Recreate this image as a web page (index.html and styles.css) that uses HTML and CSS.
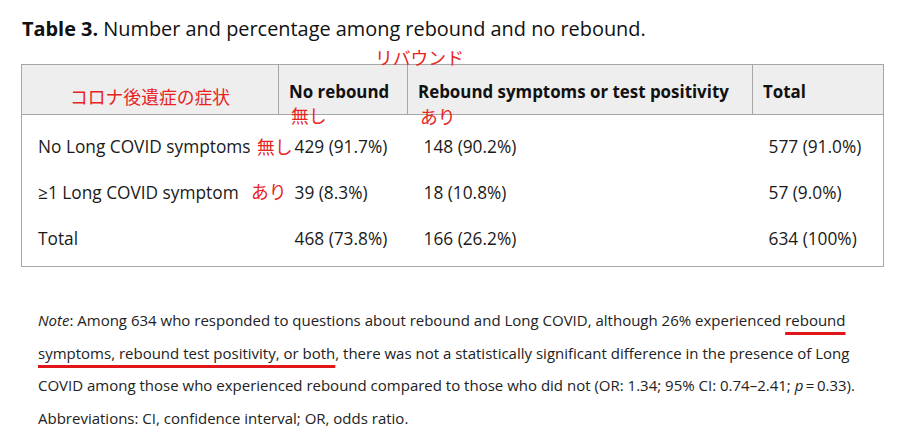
FILE: index.html
```html
<!DOCTYPE html>
<html lang="en">
<head>
<meta charset="utf-8">
<title>Table 3</title>
<link rel="stylesheet" href="styles.css">
</head>
<body>
<h2 class="caption"><b>Table 3.</b> Number and percentage among rebound and no rebound.</h2>
<div class="table-wrap">
  <table class="data">
    <thead>
      <tr>
        <th class="c1"></th>
        <th class="c2">No rebound</th>
        <th class="c3">Rebound symptoms or test positivity</th>
        <th class="c4">Total</th>
      </tr>
    </thead>
    <tbody>
      <tr class="first">
        <td>No Long COVID symptoms</td>
        <td>429 (91.7%)</td>
        <td>148 (90.2%)</td>
        <td>577 (91.0%)</td>
      </tr>
      <tr>
        <td>≥1 Long COVID symptom</td>
        <td>39 (8.3%)</td>
        <td>18 (10.8%)</td>
        <td>57 (9.0%)</td>
      </tr>
      <tr class="last">
        <td>Total</td>
        <td>468 (73.8%)</td>
        <td>166 (26.2%)</td>
        <td>634 (100%)</td>
      </tr>
    </tbody>
  </table>
  <span class="note-jp jp-symptom">コロナ後遺症の症状</span>
  <span class="note-jp jp-rebound">リバウンド</span>
  <span class="note-jp jp-nashi-h">無し</span>
  <span class="note-jp jp-ari-h">あり</span>
  <span class="note-jp jp-nashi-r">無し</span>
  <span class="note-jp jp-ari-r">あり</span>
</div>
<p class="note"><i>Note</i>: Among 634 who responded to questions about rebound and Long COVID, although 26% experienced <span class="mark">rebound</span><br><span class="mark">symptoms, rebound test positivity, or both</span>, there was not a statistically significant difference in the presence of Long<br>COVID among those who experienced rebound compared to those who did not (OR: 1.34; 95% CI: 0.74–2.41; <i>p</i>&#8201;=&#8201;0.33).<br>Abbreviations: CI, confidence interval; OR, odds ratio.</p>
</body>
</html>
```
FILE: styles.css
```css
html, body {
  margin: 0;
  padding: 0;
  background: #ffffff;
}
body {
  font-family: "Open Sans", "Noto Sans", "Noto Sans CJK JP", sans-serif;
  color: #1a1a1a;
}
.caption {
  margin: 0;
  padding: 15px 0 0 22px;
  font-size: 19.9px;
  font-weight: 400;
  line-height: 27px;
  color: #111;
}
.caption b {
  font-weight: 700;
}
.table-wrap {
  position: relative;
  margin: 22px 0 0 21px;
  width: 863px;
}
.data {
  width: 863px;
  border-collapse: collapse;
  border: 1px solid #a6a6a6;
  font-size: 17.3px;
  color: #1a1a1a;
}
.data th {
  background: #eeeeee;
  text-align: left;
  font-weight: 700;
  font-size: 16.9px;
  height: 50px;
  padding: 3px 0 0 10px;
  border-right: 1px solid #a6a6a6;
  border-bottom: 1px solid #a6a6a6;
  color: #111;
  box-sizing: border-box;
  white-space: nowrap;
}
.data th.c1 { width: 257px; }
.data th.c2 { width: 129px; }
.data th.c3 { width: 345px; }
.data th.c4 { border-right: none; }
.data td {
  height: 46px;
  padding: 0 0 0 16px;
  vertical-align: middle;
  white-space: nowrap;
  box-sizing: content-box;
}
.data tr.first td {
  padding-top: 8px;
}
.data tr.last td {
  padding-bottom: 5px;
}
.note-jp {
  position: absolute;
  font-family: "Noto Sans CJK JP", sans-serif;
  color: #e8231e;
  font-size: 17.8px;
  line-height: 20px;
  white-space: nowrap;
}
.jp-symptom { left: 49px; top: 22px; }
.jp-rebound { left: 354px; top: -17px; }
.jp-nashi-h { left: 270px; top: 41px; }
.jp-ari-h { left: 399px; top: 42px; }
.jp-nashi-r { left: 236px; top: 72px; }
.jp-ari-r { left: 230px; top: 117px; }
.note {
  margin: 37px 0 0 38px;
  font-size: 15px;
  line-height: 32.5px;
  color: #222;
}
.mark {
  text-decoration: underline;
  text-decoration-color: #e0161b;
  text-decoration-thickness: 3px;
  text-underline-offset: 6px;
}
```
